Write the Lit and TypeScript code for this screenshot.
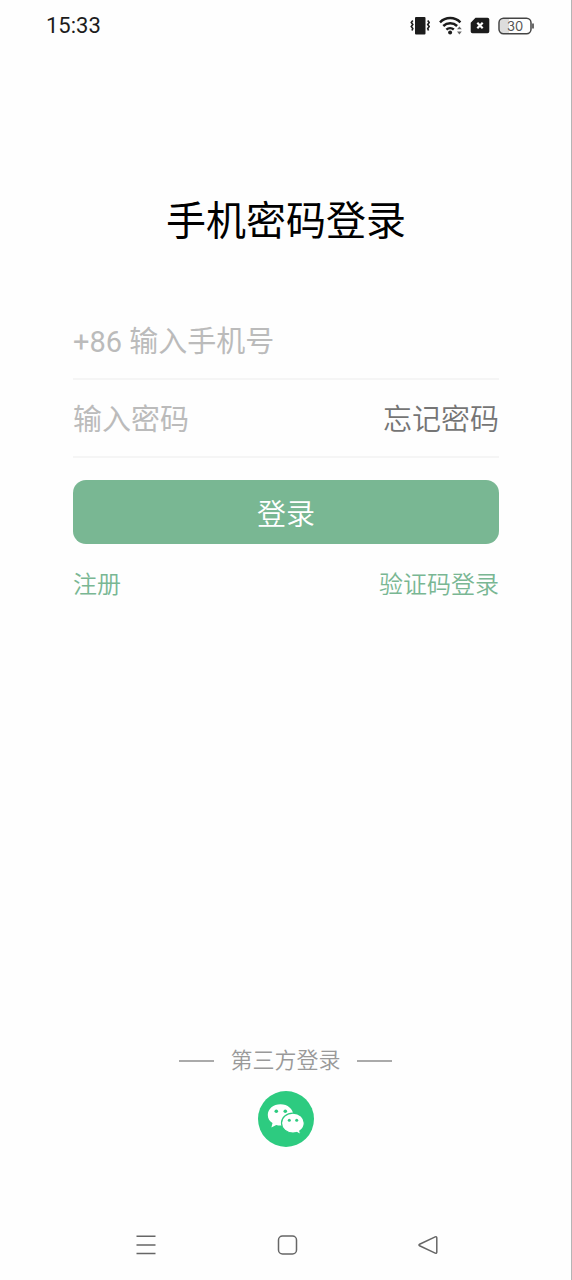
import { LitElement, html, css } from "lit";
import { customElement, state } from "lit/decorators.js";

@customElement("status-bar")
class StatusBar extends LitElement {
  static styles = css`
    :host {
      display: flex;
      align-items: center;
      justify-content: space-between;
      height: 52px;
      padding: 0 36px 0 46px;
      box-sizing: border-box;
      color: #1c1c1c;
      font-family: Roboto, "Noto Sans", sans-serif;
      font-weight: 400;
    }
    .time {
      font-size: 22px;
      line-height: 28px;
    }
    .icons {
      display: flex;
      align-items: center;
      gap: 8px;
    }
    svg {
      display: block;
    }
    .battery-text {
      font-family: Inter, Roboto, sans-serif;
      font-size: 13px;
      fill: #555;
    }
  `;

  render() {
    return html`
      <span class="time">15:33</span>
      <div class="icons">
        <svg width="21" height="20" viewBox="0 0 21 20" aria-hidden="true">
          <rect x="6" y="1" width="10.500" height="17.500" rx="1" fill="#1c1c1c" />
          <path d="M3.800 4.500 2.300 6.500l1.500 2-1.500 2 1.500 2-.8 2M18.700 4.500l1.500 2-1.500 2 1.500 2-1.500 2 .8 2" fill="none" stroke="#1c1c1c" stroke-width="1.600" />
        </svg>
        <svg width="24" height="20" viewBox="0 0 24 20" aria-hidden="true">
          <g fill="none" stroke="#1c1c1c" stroke-width="2.500">
            <path d="M2 6.300a14.500 14.500 0 0 1 20.400 0" />
            <path d="M5.300 10a10 10 0 0 1 13.800 0" />
            <path d="M8.400 13.600a5.600 5.600 0 0 1 7.400-.1" />
          </g>
          <circle cx="12.100" cy="16.600" r="2" fill="#1c1c1c" />
          <path d="m19 13.200 2.400-2.800 2.400 2.800zM19 15.600l2.400 2.800 2.400-2.800z" fill="#666" />
        </svg>
        <svg width="20" height="18" viewBox="0 0 20 18" aria-hidden="true">
          <path d="M5.500 .8h12A1.800 1.800 0 0 1 19.300 2.600v11.900a1.800 1.800 0 0 1-1.800 1.800h-15A1.800 1.800 0 0 1 .7 14.500V5.800z" fill="#1c1c1c" />
          <path d="m7.300 5.800 5.400 5.400m0-5.400-5.400 5.400" stroke="#fff" stroke-width="2.200" />
        </svg>
        <svg width="37" height="18" viewBox="0 0 37 18" role="img" aria-label="30%">
          <path d="M5 2h6v14H5a3 3 0 0 1-3-3V5a3 3 0 0 1 3-3z" fill="#ddd" />
          <rect x="1" y="1.200" width="32" height="15.600" rx="4.500" fill="none" stroke="#444" stroke-width="1.500" />
          <path d="M35 6.500v5" stroke="#444" stroke-width="1.600" />
          <text class="battery-text" x="17" y="13.500" text-anchor="middle">30</text>
        </svg>
      </div>
    `;
  }
}

@customElement("login-form")
class LoginForm extends LitElement {
  @state() private phone = "";
  @state() private password = "";

  static styles = css`
    :host {
      display: block;
      padding: 0 72px 0 73px;
    }
    h1 {
      margin: 0;
      font-size: 40px;
      font-weight: 400;
      line-height: 60px;
      text-align: center;
      color: #000;
    }
    form {
      margin-top: 50px;
    }
    .field {
      display: flex;
      align-items: center;
      height: 78px;
      padding-top: 4px;
      box-sizing: border-box;
      border-bottom: 2px solid #f5f5f5;
    }
    input {
      flex: 1;
      min-width: 0;
      height: 44px;
      padding: 0;
      border: 0;
      outline: 0;
      background: none;
      font: inherit;
      font-size: 29px;
      font-weight: 400;
      color: #333;
    }
    input::placeholder {
      color: #bbb;
      opacity: 1;
    }
    a {
      text-decoration: none;
    }
    .forgot {
      font-size: 29px;
      line-height: 44px;
      color: #757575;
    }
    .submit {
      display: block;
      width: 100%;
      height: 64px;
      margin-top: 22px;
      padding: 0;
      border: 0;
      border-radius: 13px;
      background: #79b793;
      color: #fff;
      font: inherit;
      font-size: 29px;
    }
    .links {
      display: flex;
      justify-content: space-between;
      margin-top: 23px;
      font-size: 24px;
      line-height: 36px;
    }
    .links a {
      color: #79b793;
    }
  `;

  render() {
    return html`
      <h1>手机密码登录</h1>
      <form @submit=${(e: Event) => e.preventDefault()}>
        <div class="field">
          <input type="tel" aria-label="手机号" placeholder="+86 输入手机号" .value=${this.phone}
            @input=${(e: InputEvent) => (this.phone = (e.target as HTMLInputElement).value)} />
        </div>
        <div class="field">
          <input type="password" aria-label="密码" placeholder="输入密码" .value=${this.password}
            @input=${(e: InputEvent) => (this.password = (e.target as HTMLInputElement).value)} />
          <a class="forgot" href="#forgot">忘记密码</a>
        </div>
        <button class="submit" type="submit">登录</button>
      </form>
      <div class="links">
        <a href="#register">注册</a>
        <a href="#code">验证码登录</a>
      </div>
    `;
  }
}

@customElement("third-party-login")
class ThirdPartyLogin extends LitElement {
  static styles = css`
    :host {
      display: flex;
      flex-direction: column;
      align-items: center;
      gap: 13px;
    }
    .heading {
      display: flex;
      align-items: center;
      gap: 16px;
      font-size: 22px;
      line-height: 34px;
      color: #999;
    }
    .rule {
      width: 35px;
      height: 2px;
      background: #aaa;
    }
    button {
      display: block;
      padding: 0;
      border: 0;
      border-radius: 50%;
      background: none;
    }
    svg {
      display: block;
    }
  `;

  render() {
    return html`
      <div class="heading"><span class="rule"></span>第三方登录<span class="rule"></span></div>
      <button type="button" aria-label="微信登录">
        <svg width="56" height="56" viewBox="0 0 56 56">
          <circle cx="28" cy="28" r="28" fill="#2dcb80" />
          <path d="M22.500 13.200c-7.200 0-12.700 4.700-12.700 10.700 0 3.400 1.800 6.300 4.700 8.200l-1.100 4.300 4.800-2.500c1.400.4 2.800.6 4.300.6 7.200 0 12.700-4.700 12.700-10.600s-5.500-10.700-12.700-10.700z" fill="#fff" />
          <path d="M35 22.200c-6.500 0-11.500 4.300-11.500 9.900S28.500 42 35 42c1.300 0 2.600-.2 3.700-.5l4.100 2.300-1-3.700c2.700-1.800 4.500-4.700 4.500-8 0-5.600-4.800-9.900-11.300-9.900z" fill="#fff" stroke="#2dcb80" stroke-width="1.200" />
          <g fill="#2dcb80">
            <circle cx="18.300" cy="20.300" r="1.800" />
            <circle cx="27.300" cy="20.300" r="1.800" />
            <circle cx="31.300" cy="29.200" r="1.500" />
            <circle cx="38.700" cy="29.200" r="1.500" />
          </g>
        </svg>
      </button>
    `;
  }
}

@customElement("nav-bar")
class NavBar extends LitElement {
  static styles = css`
    :host {
      display: flex;
      align-items: center;
      justify-content: center;
      gap: 117px;
      height: 70px;
      padding-left: 3px;
      box-sizing: border-box;
    }
    button {
      padding: 0;
      border: 0;
      background: none;
    }
    svg {
      display: block;
      fill: none;
      stroke: #666;
      stroke-width: 1.500;
    }
  `;

  render() {
    return html`
      <button type="button" aria-label="菜单">
        <svg width="24" height="24" viewBox="0 0 24 24"><path d="M2.500 3.200h19M2.500 12h19M2.500 20.600h19" /></svg>
      </button>
      <button type="button" aria-label="主页">
        <svg width="24" height="24" viewBox="0 0 24 24"><rect x="3.500" y="3" width="18" height="18" rx="4" /></svg>
      </button>
      <button type="button" aria-label="返回">
        <svg width="24" height="24" viewBox="0 0 24 24"><path d="M19.200 3.900 3.600 11.200q-1.300.8 0 1.600l15.600 7.300q1.600.5 1.600-1V4.900q0-1.500-1.600-1z" /></svg>
      </button>
    `;
  }
}

@customElement("app-root")
class AppRoot extends LitElement {
  static styles = css`
    :host {
      display: flex;
      flex-direction: column;
      min-height: 100vh;
      box-sizing: border-box;
      border-right: 1px solid #b5b5b5;
      background: #fefefe;
      font-family: Roboto, "Noto Sans CJK SC", sans-serif;
      font-weight: 350;
    }
    .form {
      margin-top: 140px;
    }
    .third {
      margin-top: auto;
      margin-bottom: 63px;
    }
  `;

  render() {
    return html`
      <status-bar></status-bar>
      <login-form class="form"></login-form>
      <third-party-login class="third"></third-party-login>
      <nav-bar></nav-bar>
    `;
  }
}
